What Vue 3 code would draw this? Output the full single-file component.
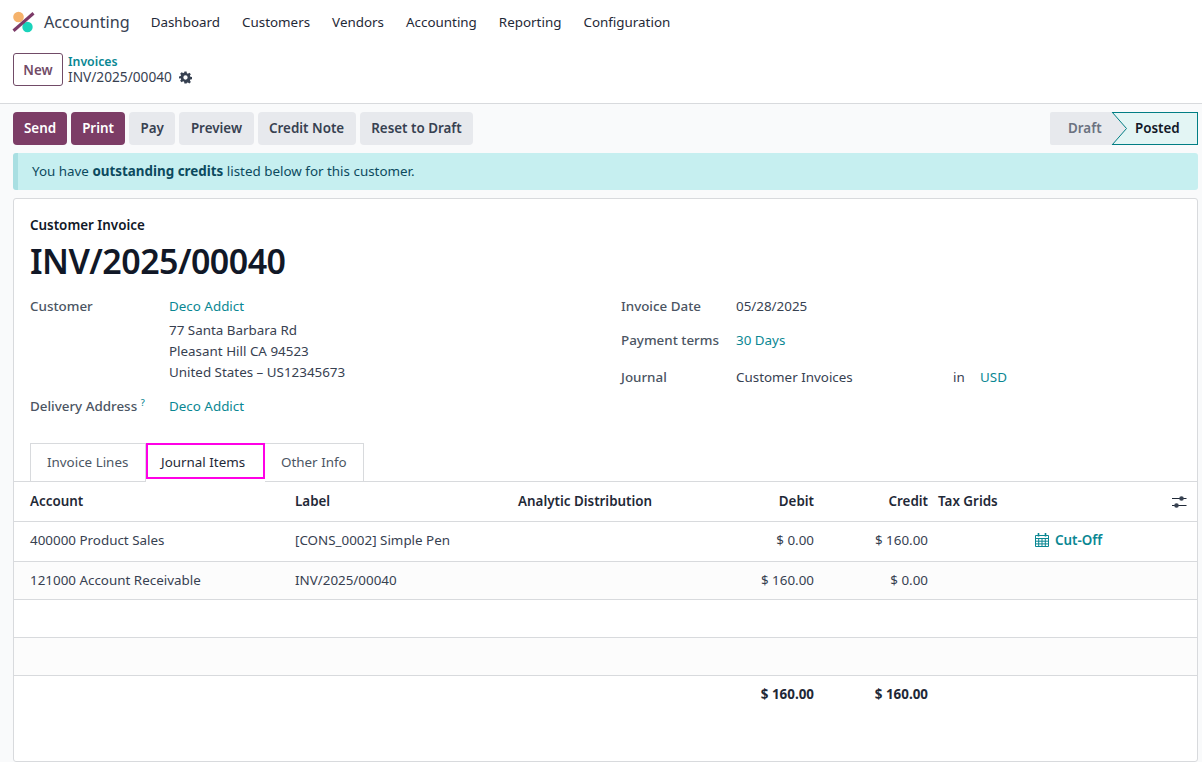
<template>
  <div class="app-root">
    <header class="navbar">
      <svg class="app-logo" viewBox="12 10 24 24">
        <circle cx="18.5" cy="17" r="5.3" fill="#f5b26b" />
        <circle cx="27.5" cy="27" r="5.2" fill="#1ad3bb" />
        <path d="M32.5 12 L34.5 14.5 L14.5 32 L12.5 29.5 Z" fill="#7c3a68" />
      </svg>
      <span class="app-name">Accounting</span>
      <nav class="menu">
        <a v-for="item in menu" :key="item">{{ item }}</a>
      </nav>
    </header>

    <div class="control-panel">
      <button class="btn-new">New</button>
      <div class="breadcrumb">
        <a class="link crumb-link">Invoices</a>
        <div class="crumb-current">
          <span>INV/2025/00040</span>
          <svg class="gear" viewBox="0 0 24 24">
            <path fill="#374151" fill-rule="evenodd" d="M10 1h4l.6 3.1 1.9.8 2.6-1.8 2.8 2.8-1.8 2.6.8 1.9 3.1.6v4l-3.1.6-.8 1.9 1.8 2.6-2.8 2.8-2.6-1.8-1.9.8L14 23h-4l-.6-3.1-1.9-.8-2.6 1.8-2.8-2.8 1.8-2.6-.8-1.9L0 14v-4l3.1-.6.8-1.9L2.1 4.9l2.8-2.8 2.6 1.8 1.9-.8zM12 8a4 4 0 1 0 0 8 4 4 0 0 0 0-8z" />
          </svg>
        </div>
      </div>
    </div>

    <main class="content">
      <div class="action-bar">
        <div class="actions">
          <button class="btn primary">Send</button>
          <button class="btn primary">Print</button>
          <button v-for="a in actions" :key="a" class="btn secondary">{{ a }}</button>
        </div>
        <div class="statusbar">
          <div class="status draft">Draft</div>
          <div class="status posted">
            <svg class="arrow" viewBox="0 0 15 33" preserveAspectRatio="none">
              <path d="M0 0 L14.5 16.5 L0 33 Z" fill="#e7e9ed" />
              <path d="M0 0 L14.5 16.5 L0 33" fill="none" stroke="#017e84" stroke-width="1" />
            </svg>
            <span>Posted</span>
          </div>
        </div>
      </div>

      <div class="alert">You have <b>outstanding credits</b> listed below for this customer.</div>

      <section class="sheet">
        <div class="sheet-head">
          <div class="move-type">Customer Invoice</div>
          <h1>INV/2025/00040</h1>

          <div class="groups">
            <div class="group-left">
              <div class="field-row">
                <label>Customer</label>
                <div class="value">
                  <a class="link">Deco Addict</a>
                  <div class="address">
                    <div>77 Santa Barbara Rd</div>
                    <div>Pleasant Hill CA 94523</div>
                    <div>United States – US12345673</div>
                  </div>
                </div>
              </div>
              <div class="field-row delivery">
                <label>Delivery Address <sup>?</sup></label>
                <div class="value"><a class="link">Deco Addict</a></div>
              </div>
            </div>
            <div class="group-right">
              <div class="field-row">
                <label>Invoice Date</label>
                <div class="value">05/28/2025</div>
              </div>
              <div class="field-row r2">
                <label>Payment terms</label>
                <div class="value"><a class="link">30 Days</a></div>
              </div>
              <div class="field-row r3">
                <label>Journal</label>
                <div class="value journal">
                  <span class="journal-name">Customer Invoices</span>
                  <span class="in">in</span>
                  <a class="link">USD</a>
                </div>
              </div>
            </div>
          </div>

          <div class="tabs">
            <div class="tab first">Invoice Lines</div>
            <div class="tab active">Journal Items</div>
            <div class="tab last">Other Info</div>
          </div>
        </div>

        <table class="lines">
          <colgroup>
            <col class="c-account" /><col class="c-label" /><col class="c-analytic" />
            <col class="c-debit" /><col class="c-credit" /><col class="c-tax" /><col />
          </colgroup>
          <thead>
            <tr>
              <th>Account</th>
              <th>Label</th>
              <th>Analytic Distribution</th>
              <th class="num">Debit</th>
              <th class="num">Credit</th>
              <th class="tax">Tax Grids</th>
              <th class="opt">
                <svg viewBox="0 0 16 14" class="sliders">
                  <path d="M1 3.5h14.5M1 10.5h14.5" stroke="#1f2937" stroke-width="1.1" />
                  <circle cx="10.5" cy="3.5" r="2.3" fill="#374151" />
                  <circle cx="5.5" cy="10.5" r="2.3" fill="#374151" />
                </svg>
              </th>
            </tr>
          </thead>
          <tbody>
            <tr v-for="l in lines" :key="l.account" :class="l.cls">
              <td>{{ l.account }}</td>
              <td>{{ l.label }}</td>
              <td></td>
              <td class="num">{{ l.debit }}</td>
              <td class="num">{{ l.credit }}</td>
              <td></td>
              <td class="cut-cell">
                <a v-if="l.cutoff" class="cutoff">
                  <svg viewBox="0 0 14 14" class="cal">
                    <path fill="none" stroke="#0a8793" stroke-width="1" d="M.5 2.5h13v11H.5zM.5 5.5h13M.5 8.2h13M.5 10.9h13M3.7 5.5v8M7 5.5v8M10.3 5.5v8" />
                    <path stroke="#0a8793" stroke-width="1.6" d="M3.5 0v3.5M10.5 0v3.5" />
                  </svg>
                  Cut-Off
                </a>
              </td>
            </tr>
            <tr class="empty"><td colspan="7"></td></tr>
            <tr class="empty tinted"><td colspan="7"></td></tr>
          </tbody>
          <tfoot>
            <tr>
              <td></td><td></td><td></td>
              <td class="num">$ 160.00</td>
              <td class="num">$ 160.00</td>
              <td></td><td></td>
            </tr>
          </tfoot>
        </table>
      </section>
    </main>
  </div>
</template>

<script setup>
const menu = ['Dashboard', 'Customers', 'Vendors', 'Accounting', 'Reporting', 'Configuration']
const actions = ['Pay', 'Preview', 'Credit Note', 'Reset to Draft']
const lines = [
  { account: '400000 Product Sales', label: '[CONS_0002] Simple Pen', debit: '$ 0.00', credit: '$ 160.00', cutoff: true, cls: 'row-a' },
  { account: '121000 Account Receivable', label: 'INV/2025/00040', debit: '$ 160.00', credit: '$ 0.00', cutoff: false, cls: 'row-b' },
]
</script>

<style>
html, body { margin: 0; background: #fff; }
</style>

<style scoped>
.app-root {
  width: 1202px;
  height: 762px;
  overflow: hidden;
  font-family: "Noto Sans", "Open Sans", sans-serif;
  font-size: 13.4px;
  color: #374151;
  background: #fff;
}

.navbar {
  height: 44px;
  display: flex;
  align-items: center;
  padding-left: 12px;
  color: #1f2937;
}
.app-logo { width: 24px; height: 24px; flex-shrink: 0; }
.app-name { font-size: 16.2px; margin-left: 8px; color: #374151; }
.menu { display: flex; gap: 22px; margin-left: 21px; }

.control-panel {
  height: 60px;
  box-sizing: border-box;
  display: flex;
  align-items: flex-start;
  padding: 9px 0 0 13px;
  border-bottom: 1px solid #d8dadd;
}
.btn-new {
  width: 50px;
  height: 33px;
  background: #fff;
  border: 1px solid #714b67;
  border-radius: 3px;
  color: #714b67;
  font: 600 13.4px "Noto Sans", sans-serif;
  padding: 0;
}
.breadcrumb { margin-left: 5px; padding-top: 1px; }
.crumb-link { font-weight: 600; font-size: 12.3px; line-height: 15px; display: block; }
.crumb-current { display: flex; align-items: center; gap: 7px; font-size: 13.7px; line-height: 16px; }
.gear { width: 13px; height: 13px; }
.link { color: #0a8793; }

.content {
  background: #f9fafb;
  height: 658px;
  padding: 8px 4px 0 13px;
  box-sizing: border-box;
}

.action-bar { display: flex; justify-content: space-between; height: 33px; }
.actions { display: flex; gap: 4px; }
.btn {
  height: 33px;
  padding: 0 11.5px 2px;
  border: none;
  border-radius: 4px;
  font: 600 13.4px "Noto Sans", sans-serif;
}
.primary { background: #7c3d66; color: #fff; padding: 0 11px 2px; }
.secondary { background: #e7e9ed; color: #374151; }

.statusbar { display: flex; height: 33px; }
.status { display: flex; align-items: center; font-weight: 600; box-sizing: border-box; padding-bottom: 2px; }
.draft { width: 62px; background: #e7e9ed; color: #6b7280; padding-left: 18px; border-radius: 2px 0 0 2px; }
.posted {
  position: relative;
  width: 86px;
  background: #e3f5f4;
  border: 1px solid #017e84;
  border-left: none;
  color: #111827;
  padding-left: 23px;
}
.arrow { position: absolute; left: 0; top: -1px; width: 15px; height: 33px; overflow: visible; }

.alert {
  margin-top: 8px;
  height: 37px;
  line-height: 37px;
  background: #c6eff0;
  border-left: 5px solid #a9dfe2;
  border-radius: 3px;
  padding-left: 14px;
  color: #0c4a5e;
}

.sheet {
  margin-top: 8px;
  height: 564px;
  background: #fff;
  border: 1px solid #d8dadd;
  border-radius: 3px;
  box-sizing: border-box;
}
.sheet-head { padding: 16px 16px 0; }
.move-type { font-weight: 600; color: #111827; line-height: 20px; }
h1 {
  margin: 3px 0 0;
  font-size: 34px;
  letter-spacing: -0.55px;
  line-height: 46px;
  font-weight: 600;
  color: #111827;
}

.groups { display: flex; margin-top: 12px; }
.group-left { width: 591px; }
.group-right { flex: 1; }
.field-row { display: flex; }
label { color: #4b5563; font-weight: 500; width: 139px; flex-shrink: 0; line-height: 21px; }
.address { line-height: 21px; margin-top: 3px; }
.value { line-height: 21px; }
.delivery { margin-top: 13px; }
sup { color: #0a8793; font-size: 9px; line-height: 0; }
.group-right label { width: 115px; }
.r2 { margin-top: 13px; }
.r3 { margin-top: 16px; }
.journal { display: flex; }
.journal-name { width: 217px; }
.in { width: 27px; }

.tabs { display: flex; margin-top: 26px; height: 38px; }
.tab {
  box-sizing: border-box;
  height: 38px;
  line-height: 37px;
  padding: 0 16px;
  border: 1px solid #d8dadd;
  border-left: none;
  border-bottom: none;
  color: #4b5563;
  white-space: nowrap;
}
.first { border-left: 1px solid #d8dadd; width: 116px; }
.last { width: 99px; }
.active {
  position: relative;
  z-index: 1;
  width: 119px;
  border: 2px solid #ff00e6;
  height: 36px;
  line-height: 34px;
  padding: 0 13px;
  color: #1f2937;
  box-shadow: 0 3px 0 #fff;
}

.lines {
  width: 100%;
  table-layout: fixed;
  border-collapse: collapse;
  border-top: 1px solid #d8dadd;
}
.c-account { width: 265px; }
.c-label { width: 223px; }
.c-analytic { width: 150px; }
.c-debit { width: 162px; }
.c-credit { width: 114px; }
.c-tax { width: 96px; }
th {
  height: 40px;
  padding: 0 0 1px 16px;
  text-align: left;
  font-weight: 600;
  color: #1f2937;
  border-bottom: 1px solid #d8dadd;
  white-space: nowrap;
  box-sizing: border-box;
}
td {
  height: 40px;
  padding: 0 0 0 16px;
  border-bottom: 1px solid #d8dadd;
  white-space: nowrap;
  box-sizing: border-box;
}
th.num { text-align: right; padding: 0 0 1px; }
td.num { text-align: right; padding: 0; }
th.tax { padding-left: 10px; }
.opt { text-align: right; padding-right: 10px; }
.sliders { width: 16px; height: 14px; vertical-align: middle; }
.row-a td { height: 40px; padding-bottom: 3px; }
.row-b td { height: 38px; padding-bottom: 2px; background: #fcfcfc; }
.empty td { height: 38px; }
.tinted td { background: #fcfcfc; }
.row-a td.cut-cell { padding: 0 0 1px 11px; }
.row-b td.cut-cell { padding-left: 11px; }
.cutoff { color: #0a8793; font-weight: 600; display: inline-flex; align-items: center; gap: 6px; }
.cal { width: 14px; height: 14px; }
tfoot td { border-bottom: none; font-weight: 700; color: #1f2937; }
tfoot td.num { padding-bottom: 4px; }
</style>
